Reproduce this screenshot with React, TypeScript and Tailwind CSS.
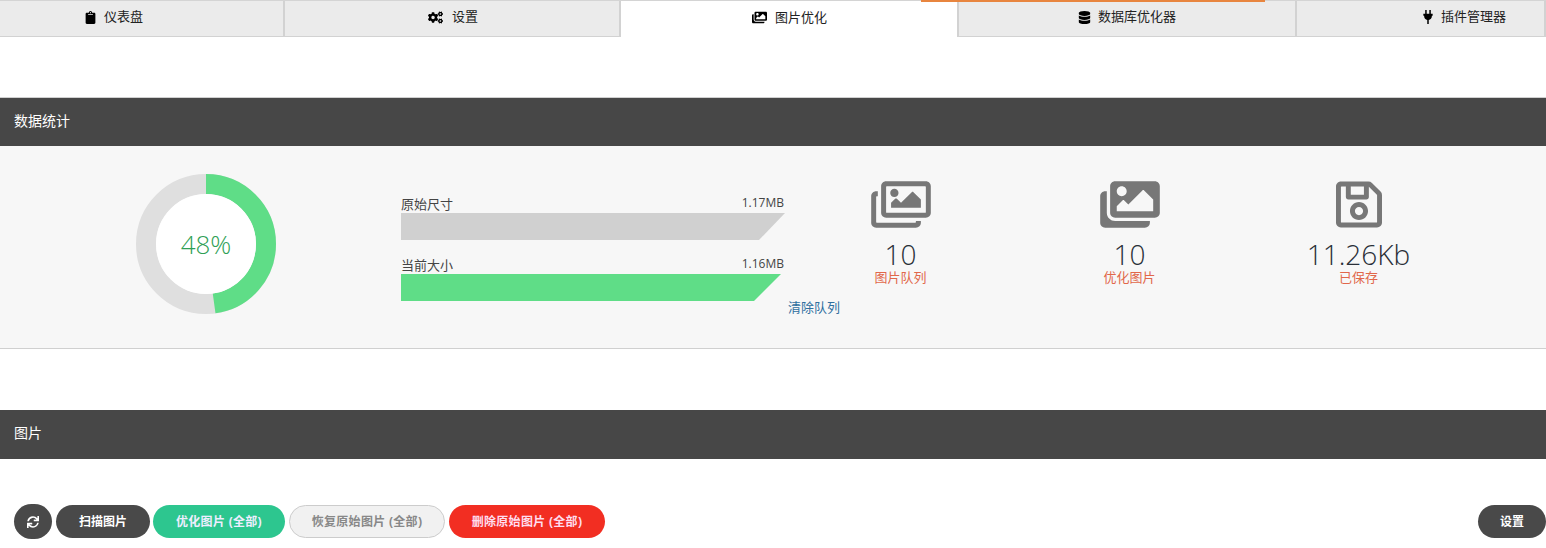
import React from "react";
import { FaClipboard, FaCogs, FaDatabase, FaImages, FaRegImages, FaRegSave, FaSync } from "react-icons/fa";

const font = "font-['Open_Sans','Noto_Sans_CJK_SC',sans-serif]";

function PlugIcon({ className }: { className?: string }) {
  return (
    <svg viewBox="0 0 10 15" className={className} fill="currentColor">
      <rect x="2" y="0" width="1.6" height="4.5" />
      <rect x="6.4" y="0" width="1.6" height="4.5" />
      <path d="M0 4h10v2.2H9.2C9.2 8.8 7.6 10.4 5.8 10.7V15H4.2V10.7C2.4 10.4 .8 8.8 .8 6.2H0z" />
    </svg>
  );
}

const tabs = [
  { label: "仪表盘", icon: FaClipboard, width: "w-[285px] pr-[56px] gap-[7px]", iconSize: "text-[13px]" },
  { label: "设置", icon: FaCogs, width: "w-[336px] pl-[2px] gap-[9px]", iconSize: "text-[15px]" },
  { label: "图片优化", icon: FaImages, width: "w-[338px] pl-[1px] gap-[8px]", iconSize: "text-[15px]" },
  { label: "数据库优化器", icon: FaDatabase, width: "w-[338px] gap-[7px]", iconSize: "text-[13px]" },
  { label: "插件管理器", icon: PlugIcon, width: "w-[249px] pl-[88px] gap-[8px]", iconSize: "w-[10px] h-[14px]" },
];

function SectionTitle({ children, plain }: { children: React.ReactNode; plain?: boolean }) {
  return (
    <div className={`h-[49px] bg-[#474747] pl-[14px] flex items-center text-[14px] text-white ${plain ? "pb-[4px]" : "pb-[3px] border-t border-[#d0d0d0]"}`}>
      {children}
    </div>
  );
}

function Bar({ label, value, color, clip }: { label: string; value: string; color: string; clip: string }) {
  return (
    <div className="w-[384px]">
      <div className="flex justify-between items-end h-[20px] text-[13px] leading-[18px] text-[#444]">
        <span>{label}</span>
        <span className="text-[12px] pr-[1px] -translate-y-[1px]">{value}</span>
      </div>
      <div className={`h-[27px] ${color} ${clip}`} />
    </div>
  );
}

function Stat({ icon: Icon, value, label, iconSize }: { icon: React.ElementType; value: string; label: string; iconSize: string }) {
  return (
    <div className="w-[229px] flex flex-col items-center">
      <Icon className={`${iconSize} text-[#777]`} />
      <div className="text-[28px] leading-[30px] mt-[8px] text-[#2a2f38] font-light">{value}</div>
      <div className="text-[13px] leading-[16px] text-[#e1674a]">{label}</div>
    </div>
  );
}

export default function App() {
  return (
    <div className={`${font} relative w-[1546px] h-[548px] overflow-hidden bg-white`}>
      <div className="relative flex h-[37px] border-t border-[#d4d4d4]">
        {tabs.map((t) => (
          <div
            key={t.label}
            className={`${t.width} flex items-center justify-center pb-[3px] text-[13px] text-[#222] border-r-2 border-[#d2d2d2] ${
              t.label === "图片优化" ? "bg-white" : "bg-[#ebebeb] border-b"
            }`}
          >
            <t.icon className={`${t.iconSize} text-black`} />
            <span>{t.label}</span>
          </div>
        ))}
        <div className="absolute left-[921px] top-[-1px] w-[344px] h-[2px] bg-[#e8853f]" />
      </div>

      <div className="mt-[60px]">
        <SectionTitle>数据统计</SectionTitle>
        <div className="h-[203px] bg-[#f7f7f7] border-b border-[#d0d0d0] flex pt-[28px]">
          <div className="w-[401px] pl-[136px]">
            <div className="relative w-[140px] h-[140px]">
              <svg viewBox="0 0 140 140" className="w-[140px] h-[140px]">
                <circle cx="70" cy="70" r="60" fill="none" stroke="#dfdfdf" strokeWidth="20" />
                <circle
                  cx="70"
                  cy="70"
                  r="60"
                  fill="none"
                  stroke="#5fdd87"
                  strokeWidth="20"
                  strokeDasharray="180 377"
                  transform="rotate(-90 70 70)"
                />
                <circle cx="70" cy="70" r="50" fill="#fff" />
              </svg>
              <div className="absolute inset-0 flex items-center justify-center text-[26px] font-light text-[#2f9f56]">48%</div>
            </div>
          </div>
          <div className="w-[385px] pt-[19px] relative">
            <Bar label="原始尺寸" value="1.17MB" color="bg-[#d0d0d0]" clip="[clip-path:polygon(0_0,100%_0,358px_100%,0_100%)]" />
            <div className="h-[14px]" />
            <Bar label="当前大小" value="1.16MB" color="bg-[#5fdd87]" clip="[clip-path:polygon(0_0,380px_0,353px_100%,0_100%)]" />
            <div className="absolute left-[387px] top-[124px] whitespace-nowrap text-[13px] text-[#2f6f9f]">清除队列</div>
          </div>
          <div className="flex pt-[4px]">
            <Stat icon={FaRegImages} value="10" label="图片队列" iconSize="w-[60px] h-[53px]" />
            <Stat icon={FaImages} value="10" label="优化图片" iconSize="w-[60px] h-[53px]" />
            <Stat icon={FaRegSave} value="11.26Kb" label="已保存" iconSize="w-[46px] h-[53px]" />
          </div>
        </div>
      </div>

      <div className="mt-[61px]">
        <SectionTitle plain>图片</SectionTitle>
      </div>

      <div className="flex items-center justify-between pl-[14px] mt-[45px] text-[12px] font-bold">
        <div className="flex items-center gap-[4px]">
          <div className="w-[38px] h-[35px] rounded-full bg-[#494949] text-white flex items-center justify-center">
            <FaSync className="text-[12px]" />
          </div>
          <div className="w-[94px] h-[33px] rounded-full bg-[#494949] text-white flex items-center justify-center">扫描图片</div>
          <div className="w-[132px] h-[33px] -ml-[1px] rounded-full bg-[#2dc68f] text-[#eef] tracking-[0.3px] flex items-center justify-center">优化图片 (全部)</div>
          <div className="w-[156px] h-[33px] rounded-full bg-[#f1f1f1] border border-[#ccc] text-[#888] tracking-[0.3px] flex items-center justify-center">恢复原始图片 (全部)</div>
          <div className="w-[156px] h-[33px] rounded-full bg-[#f22e22] text-[#fde] tracking-[0.3px] flex items-center justify-center">删除原始图片 (全部)</div>
        </div>
        <div className="w-[68px] h-[33px] rounded-full bg-[#494949] text-white flex items-center justify-center">设置</div>
      </div>
    </div>
  );
}
